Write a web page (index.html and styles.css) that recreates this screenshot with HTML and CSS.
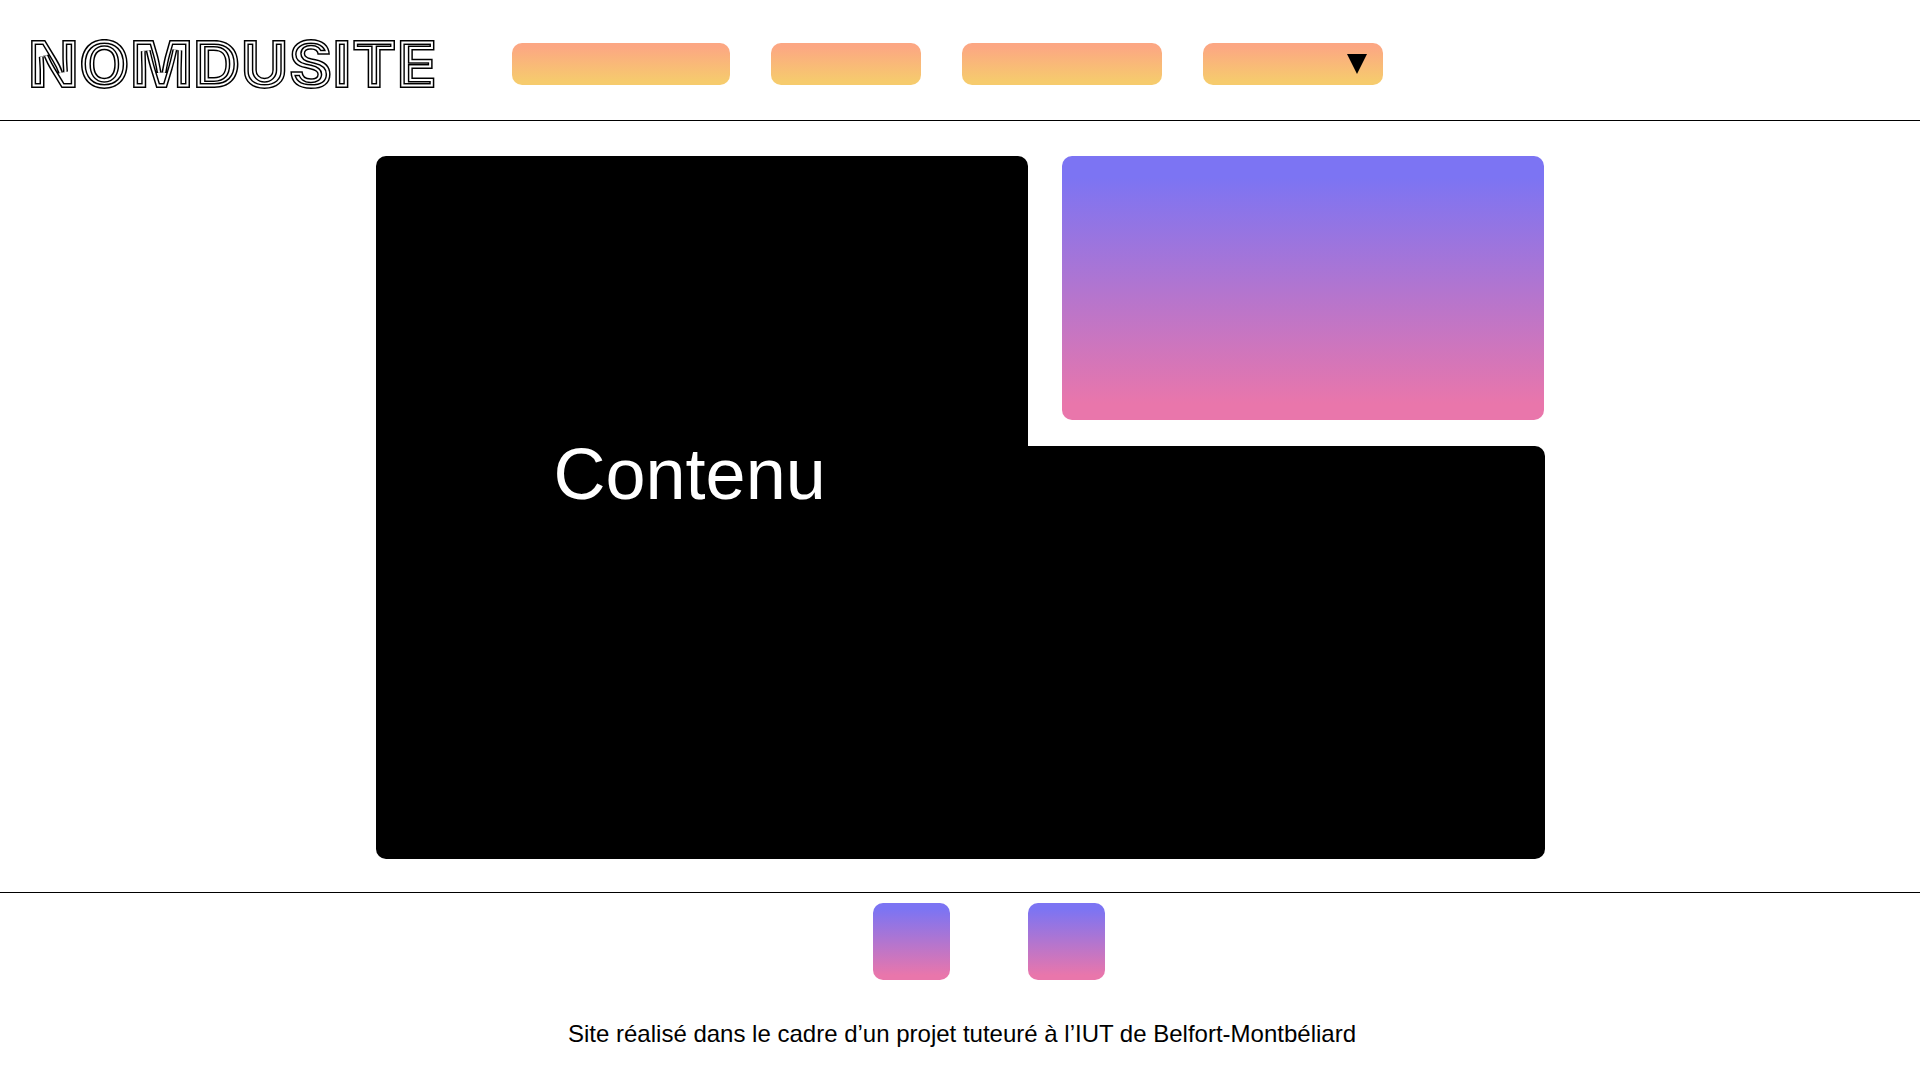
FILE: index.html
```html
<!DOCTYPE html>
<html lang="fr">
<head>
<meta charset="utf-8">
<meta name="viewport" content="width=device-width, initial-scale=1">
<title>NOMDUSITE</title>
<link rel="stylesheet" href="styles.css">
</head>
<body>
<header class="site-header">
  <a class="logo" href="#" aria-label="NOMDUSITE">
    <svg class="logo-art" viewBox="0 0 410 60">
      <defs>
        <clipPath id="letter-shape"><use href="#wordmark"/></clipPath>
      </defs>
      <g clip-path="url(#letter-shape)">
        <g class="line-inner"><text id="wordmark" x="-2" y="58">NOMDUSITE</text></g>
        <use class="line-gap" href="#wordmark"/>
        <use class="line-outer" href="#wordmark"/>
      </g>
    </svg>
  </a>
  <nav class="menu" aria-label="Menu principal">
    <a class="menu-item wide" href="#" aria-label="Rubrique 1"></a>
    <a class="menu-item narrow" href="#" aria-label="Rubrique 2"></a>
    <a class="menu-item medium" href="#" aria-label="Rubrique 3"></a>
    <button class="menu-item dropdown" type="button" aria-label="Plus de rubriques">
      <svg class="arrow" viewBox="0 0 20 20"><path d="M0 0h20L10 20z"/></svg>
    </button>
  </nav>
</header>
<main class="content">
  <div class="panel panel-top"></div>
  <aside class="feature"></aside>
  <section class="panel panel-bottom"><h1 class="content-title">Contenu</h1></section>
</main>
<footer class="site-footer">
  <div class="socials">
    <a class="social" href="#" aria-label="Réseau social 1"></a>
    <a class="social" href="#" aria-label="Réseau social 2"></a>
  </div>
  <p class="credits">Site réalisé dans le cadre d’un projet tuteuré à l’IUT de Belfort-Montbéliard</p>
</footer>
</body>
</html>
```
FILE: styles.css
```css
* { box-sizing: border-box; }

body {
  margin: 0;
  background: #fff;
  color: #000;
  font-family: "Liberation Sans", Arial, sans-serif;
}

.site-header {
  display: flex;
  align-items: center;
  gap: 72px;
  min-height: 121px;
  padding: 0 30px;
  border-bottom: 1px solid #000;
}

.logo { display: block; }

.logo-art {
  display: block;
  width: 410px;
  height: 60px;
  overflow: visible;
  font-family: Inter, sans-serif;
  font-size: 66px;
  font-weight: 900;
}

/* Concentric lines that follow the inside edge of each letter */
.line-inner { fill: #fff; stroke: #000; stroke-width: 10px; }
.line-gap { fill: none; stroke: #fff; stroke-width: 7px; }
.line-outer { fill: none; stroke: #000; stroke-width: 3px; }

.menu {
  display: flex;
  gap: 41px;
  padding-top: 7px;
}

.menu-item {
  display: flex;
  align-items: center;
  justify-content: flex-end;
  height: 42px;
  padding: 0 16px;
  border: 0;
  border-radius: 10px;
  background: linear-gradient(#fca783 8%, #f6cb6d 92%);
}

.wide { width: 218px; }
.narrow { width: 150px; }
.medium { width: 200px; }
.dropdown { width: 180px; }

.arrow { width: 20px; height: 20px; }

.content {
  display: grid;
  grid-template-columns: 652px 1fr;
  grid-template-rows: 290px auto;
  width: 61%;
  max-width: 1169px;
  margin: 35px auto 33px;
}

.panel { background: #000; }

.panel-top { border-radius: 10px 10px 0 0; }

.panel-bottom {
  grid-column: 1 / -1;
  min-height: 413px;
  padding-left: 178px;
  border-radius: 0 10px 10px 10px;
}

.content-title {
  margin: 0;
  color: #fff;
  font-size: 72px;
  font-weight: 400;
  line-height: 56px;
}

.feature {
  margin: 0 1px 26px 34px;
  border-radius: 10px;
  background: linear-gradient(#7c74f3 8%, #e976ab 94%);
}

.site-footer {
  padding: 10px 0 32px;
  border-top: 1px solid #000;
}

.socials {
  display: flex;
  justify-content: center;
  gap: 78px;
  padding-left: 58px;
}

.social {
  width: 77px;
  height: 77px;
  border-radius: 10px;
  background: linear-gradient(#7c74f3 8%, #e976ab 94%);
}

.credits {
  margin: 40px 0 0;
  padding-left: 4px;
  font-size: 24px;
  line-height: 28px;
  text-align: center;
}
```
